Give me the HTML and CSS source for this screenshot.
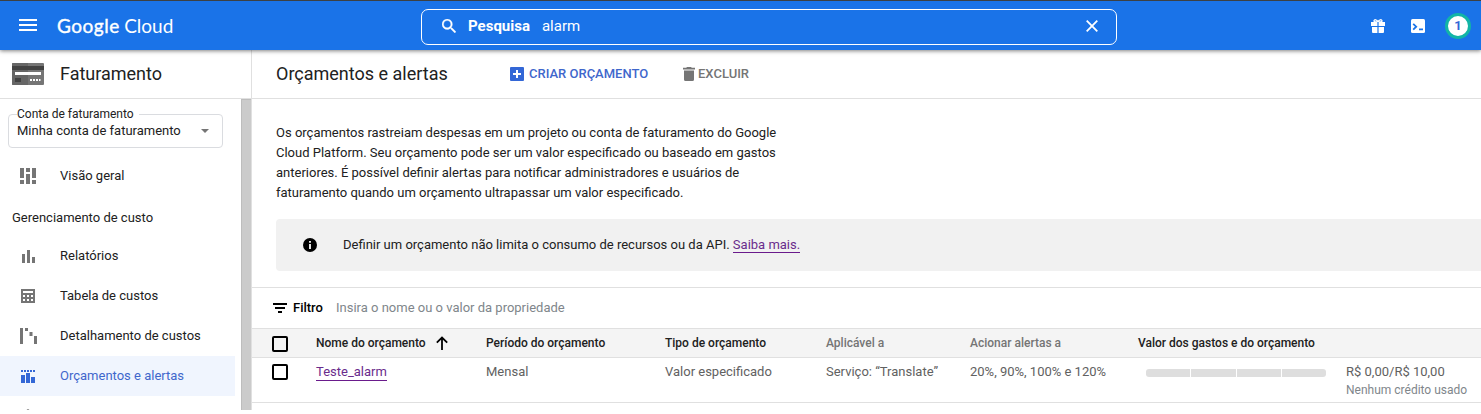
FILE: index.html
```html
<!DOCTYPE html>
<html lang="pt-BR">
<head>
<meta charset="utf-8">
<title>Orçamentos e alertas</title>
<link rel="stylesheet" href="styles.css">
</head>
<body>
<header class="topbar">
  <svg class="burger" width="18" height="12" viewBox="0 0 18 12"><path d="M0 0h18v2H0zM0 5h18v2H0zM0 10h18v2H0z" fill="#fff"/></svg>
  <div class="brand"><span class="brand-google">Google</span><span class="brand-cloud">Cloud</span></div>
  <div class="search">
    <svg class="search-icon" width="14" height="14" viewBox="3 3 17.5 17.5"><path fill="#fff" stroke="#fff" stroke-width=".4" d="M15.5 14h-.79l-.28-.27A6.471 6.471 0 0 0 16 9.500 6.500 6.500 0 1 0 9.500 16c1.610 0 3.090-.59 4.230-1.570l.27.28v.79l5 4.990L20.490 19l-4.990-5zm-6 0C7.010 14 5 11.990 5 9.500S7.010 5 9.500 5 14 7.010 14 9.500 11.990 14 9.500 14z"/></svg>
    <b class="search-label">Pesquisa</b><span class="search-text">alarm</span>
    <svg class="search-close" width="12" height="12" viewBox="0 0 12 12"><path d="M.7.7l10.600 10.600M11.300.7L.7 11.300" stroke="#fff" stroke-width="1.800"/></svg>
  </div>
  <div class="tools">
    <svg width="14" height="14" viewBox="0 0 14 14"><path fill="#fff" d="M0 3h14v4H0zM1 8h12v5a1 1 0 0 1-1 1H2a1 1 0 0 1-1-1z"/><path fill="none" stroke="#fff" stroke-width="1.400" d="M7 3C6 .5 3 0 3 2c0 1 2 1 4 1 2 0 4 0 4-1 0-2-3-1.500-4 1z"/><path d="M7 3v11" stroke="#1a73e8" stroke-width="1.200"/></svg>
    <svg width="14" height="14" viewBox="0 0 14 14"><rect width="14" height="14" rx="1.500" fill="#fff"/><path d="M2.200 4.800L5.200 7.700 2.200 10.600M8 10.400h4" fill="none" stroke="#1a73e8" stroke-width="1.800"/></svg>
    <span class="count">1</span>
  </div>
</header>
<div class="shell">
  <nav class="side">
    <div class="side-head">
      <svg width="32" height="22" viewBox="0 0 32 22"><rect width="32" height="22" rx="1" fill="#757575"/><path d="M0 1a1 1 0 0 1 1-1h15v22H1a1 1 0 0 1-1-1z" fill="#666"/><path d="M0 3h32v4H0z" fill="#424242"/><path d="M3 9h26v3H3zM18 16h2v2h-2zM21 16h2v2h-2zM24 16h2v2h-2zM27 16h1.500v2H27z" fill="#fff"/><path d="M3 15h6v4H3z" fill="#424242"/></svg>
      <span>Faturamento</span>
    </div>
    <div class="side-body">
      <div class="side-list">
        <fieldset class="account">
          <legend>Conta de faturamento</legend>
          <div class="account-value"><span>Minha conta de faturamento</span><i class="caret"></i></div>
        </fieldset>
        <a class="item"><span class="ico"><svg width="16" height="16" viewBox="0 0 16 16" fill="#757575"><path d="M0 0h4v10H0zM0 12h4v4H0zM6 0h4v4H6zM6 6h4v10H6zM12 0h4v10h-4zM12 12h4v4h-4z"/></svg></span>Visão geral</a>
        <div class="group">Gerenciamento de custo</div>
        <a class="item"><span class="ico"><svg class="low" width="14" height="13" viewBox="0 0 14 13" fill="#757575"><path d="M1 4h3v9H1zM6 0h3v13H6zM11 7h3v6h-3z"/></svg></span>Relatórios</a>
        <a class="item"><span class="ico"><svg width="14" height="14" viewBox="0 0 14 14"><rect width="14" height="14" fill="#757575"/><path d="M2 2h10v2H2zM2 6h2v2H2zM6 6h2v2H6zM10 6h2v2h-2zM2 10h2v2H2zM6 10h2v2H6zM10 10h2v2h-2z" fill="#fff"/></svg></span>Tabela de custos</a>
        <a class="item"><span class="ico"><svg width="17" height="16" viewBox="0 0 17 16" fill="#757575"><path d="M0 0h3v16H0zM5 0h3v3H5zM9.500 4h3v4h-3zM14 8h3v8h-3z"/></svg></span>Detalhamento de custos</a>
        <a class="item active"><span class="ico"><svg width="14" height="14" viewBox="0 0 14 14" fill="#3367d6"><path d="M0 1h2v2H0zM3 1h2v2H3zM6 1h2v2H6zM9 1h2v2H9zM12 1h2v2h-2zM0 6h4v8H0zM5 4h4v10H5zM10 8h4v6h-4z"/></svg></span>Orçamentos e alertas</a>
        <a class="item"><span class="ico"><svg width="16" height="14" viewBox="0 0 16 14" fill="#757575"><path d="M8 0l6 4v10H2V4z"/></svg></span></a>
      </div>
      <div class="scroll"></div>
    </div>
  </nav>
  <main class="main">
    <div class="main-head">
      <h1>Orçamentos e alertas</h1>
      <span class="action create"><svg width="14" height="14" viewBox="0 0 14 14"><rect width="14" height="14" rx="1" fill="#3367d6"/><path d="M7 3v8M3 7h8" stroke="#fff" stroke-width="2"/></svg>CRIAR ORÇAMENTO</span>
      <span class="action delete"><svg width="12" height="14" viewBox="0 0 12 14" fill="#757575"><path d="M4 0h4l.8.800H12v1.700H0V.8h3.200zM1 3.500h10V12.500A1.500 1.500 0 0 1 9.500 14h-7A1.500 1.500 0 0 1 1 12.500z"/></svg>EXCLUIR</span>
    </div>
    <p class="intro">Os orçamentos rastreiam despesas em um projeto ou conta de faturamento do Google<br>Cloud Platform. Seu orçamento pode ser um valor especificado ou baseado em gastos<br>anteriores. É possível definir alertas para notificar administradores e usuários de<br>faturamento quando um orçamento ultrapassar um valor especificado.</p>
    <div class="notice">
      <svg width="14" height="14" viewBox="0 0 14 14"><circle cx="7" cy="7" r="7"/><path d="M6.100 3h1.800v1.700H6.100zM6.100 6h1.800v5H6.100z" fill="#fff"/></svg>
      <span class="notice-text">Definir um orçamento não limita o consumo de recursos ou da API. <a class="link">Saiba mais.</a></span>
    </div>
    <div class="filter">
      <svg width="14" height="10" viewBox="0 0 14 10"><path d="M0 0h14v2H0zM2 4h10v2H2zM5 8h4v2H5z"/></svg>
      <b>Filtro</b><span class="hint">Insira o nome ou o valor da propriedade</span>
    </div>
    <div class="row head">
      <span class="check"></span>
      <span class="name">Nome do orçamento<svg width="12" height="14" viewBox="0 0 12 14"><path d="M6 14V1.500M.8 6.700L6 1.500l5.200 5.200" fill="none" stroke="#000" stroke-width="1.800"/></svg></span>
      <span>Período do orçamento</span>
      <span>Tipo de orçamento</span>
      <span class="muted">Aplicável a</span>
      <span class="muted">Acionar alertas a</span>
      <span>Valor dos gastos e do orçamento</span>
    </div>
    <div class="row data">
      <span class="check"></span>
      <span><a class="link">Teste_alarm</a></span>
      <span>Mensal</span>
      <span>Valor especificado</span>
      <span>Serviço: “Translate”</span>
      <span>20%, 90%, 100% e 120%</span>
      <span class="spend"><span class="meter"><i></i><i></i><i></i><i></i></span><span class="amount"><span>R$ 0,00/R$ 10,00</span><small>Nenhum crédito usado</small></span></span>
    </div>
  </main>
</div>
</body>
</html>
```
FILE: styles.css
```css
* { box-sizing: border-box; }
body { margin: 0; height: 414px; overflow: hidden; background: #fff; color: #212121; font: 13px/20px Roboto, sans-serif; white-space: nowrap; }
svg { display: block; flex: none; }

.topbar { position: relative; z-index: 1; display: flex; align-items: center; height: 50px; padding: 2px 10px 0 19px; border-top: 1px solid #3c4043; background: #1a73e8; color: #fff; box-shadow: 0 1px 4px rgba(0,0,0,.5); }
.burger { margin-bottom: 3px; }
.brand { display: flex; gap: 5px; width: 364px; margin: -1px 0 0 20px; font: 19px/24px Lato, sans-serif; }
.brand-google { letter-spacing: .5px; margin-right: -.5px; -webkit-text-stroke: .4px #fff; }
.search { display: flex; align-items: center; width: 696px; height: 36px; padding: 0 18px 0 20px; border: 1px solid #fff; border-radius: 7px; font-size: 15px; }
.search-icon { margin-bottom: 2px; }
.search-label { margin: -2px 0 0 12px; font-weight: 700; }
.search-text { margin: -2px 0 0 12px; }
.search-close { margin: 0 0 2px auto; }
.tools { display: flex; align-items: center; gap: 26px; margin: -1px 0 0 auto; }
.tools svg { margin-bottom: 1px; }
.count { width: 26px; height: 26px; margin-left: -6px; border: 3px solid #12b5a6; border-radius: 50%; background: #fff; color: #3367d6; font-weight: 700; text-align: center; }

.shell { display: flex; height: 360px; }
.side { width: 252px; border-right: 1px solid #e0e0e0; }
.side-head { display: flex; align-items: center; gap: 16px; height: 49px; padding-left: 12px; border-bottom: 1px solid #e0e0e0; font-size: 18px; }
.side-body { display: flex; justify-content: space-between; height: 311px; overflow: hidden; }
.side-list { width: 235px; }
.scroll { width: 10px; border: 1px solid #bdbdbd; border-width: 1px 0 0 1px; background: #cbcbcb; }
.account { width: 215px; height: 41px; margin: 8px 0 8px 8px; padding: 0 13px 0 8px; border: 1px solid #dadce0; border-radius: 4px; }
.account legend { height: 14px; padding: 0 5px 0 0; font-size: 12px; line-height: 14px; }
.account-value { display: flex; align-items: center; justify-content: space-between; height: 20px; }
.caret { border: 4px solid transparent; border-top-color: #757575; border-bottom: 0; }
.item { display: flex; align-items: center; height: 40px; }
.ico { display: flex; justify-content: center; width: 56px; margin-right: 4px; }
.low { margin-top: 1px; }
.active { background: #f0f5fe; color: #3f67cc; }
.group { height: 40px; padding-left: 12px; line-height: 44px; }

.main { flex: 1; min-width: 0; }
.main-head { display: flex; align-items: center; height: 49px; padding-left: 24px; border-bottom: 1px solid #e0e0e0; }
.main-head h1 { width: 234px; margin: 0; font-size: 18px; font-weight: 400; }
.action { display: flex; align-items: center; font-weight: 500; }
.create { gap: 5px; width: 173px; color: #3f67cc; }
.delete { gap: 3px; color: #757575; }
.intro { margin: 24px 0 16px 24px; }
.notice { display: flex; align-items: center; gap: 26px; height: 52px; margin-left: 24px; padding-left: 27px; border-radius: 4px 0 0 4px; background: #f1f1f1; }
.link { border-bottom: 1px solid #6a1b8c; color: #6a2c8c; }
.filter { display: flex; align-items: center; height: 41px; margin-top: 16px; padding-left: 21px; border-top: 1px solid #e0e0e0; }
.filter b { width: 43px; margin-left: 6px; color: #000; font-weight: 500; }
.hint { color: #80868b; }
.row { display: grid; grid-template-columns: 44px 170px 179px 161px 144px 168px 1fr; padding-left: 20px; }
.head { align-items: center; height: 30px; border: 1px solid #e0e0e0; border-width: 1px 0; background: #f4f4f4; font-size: 12px; font-weight: 500; }
.head .check { margin-top: 1px; }
.data { height: 45px; padding-top: 4px; border-bottom: 1px solid #e0e0e0; color: #616161; }
.check { width: 16px; height: 16px; border: 2px solid #000; border-radius: 2px; }
.data .check { margin-top: 2px; }
.name { display: flex; align-items: center; gap: 10px; }
.muted { color: #757575; }
.data .link { display: inline-block; line-height: 17px; }
.spend { display: flex; padding-left: 8px; }
.meter { display: flex; gap: 1px; width: 180px; height: 8px; margin: 7px 20px 0 0; border-radius: 3px; overflow: hidden; }
.meter i { flex: 1; background: #dedede; }
.amount { display: flex; flex-direction: column; }
.amount small { font-size: 12px; line-height: 16px; color: #80868b; }
```
